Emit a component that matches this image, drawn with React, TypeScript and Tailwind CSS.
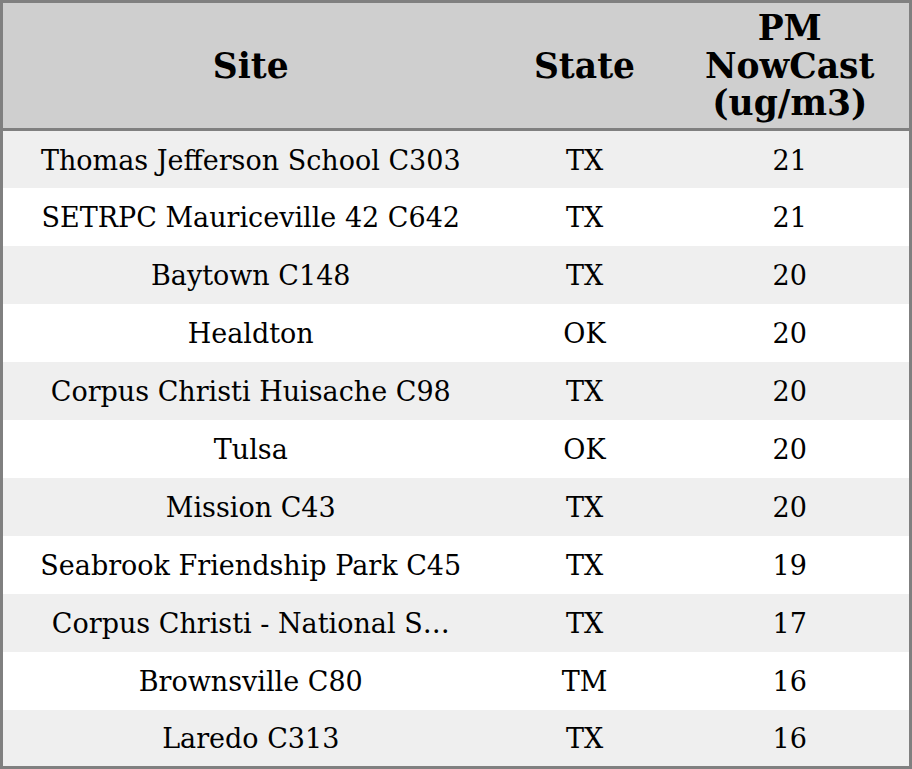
const rows = [
  { site: "Thomas Jefferson School C303", state: "TX", pm: 21 },
  { site: "SETRPC Mauriceville 42 C642", state: "TX", pm: 21 },
  { site: "Baytown C148", state: "TX", pm: 20 },
  { site: "Healdton", state: "OK", pm: 20 },
  { site: "Corpus Christi Huisache C98", state: "TX", pm: 20 },
  { site: "Tulsa", state: "OK", pm: 20 },
  { site: "Mission C43", state: "TX", pm: 20 },
  { site: "Seabrook Friendship Park C45", state: "TX", pm: 19 },
  { site: "Corpus Christi - National S…", state: "TX", pm: 17 },
  { site: "Brownsville C80", state: "TM", pm: 16 },
  { site: "Laredo C313", state: "TX", pm: 16 },
];

export default function App() {
  return (
    <div className="w-[912px] h-[769px] bg-white font-['DejaVu_Serif',serif] text-black">
      <table className="w-full h-full table-fixed border-collapse border-[3px] border-[#808080]">
        <colgroup>
          <col className="w-[497px]" />
          <col className="w-[172px]" />
          <col />
        </colgroup>
        <thead>
          <tr className="h-[128px] bg-[#cfcfcf] border-b-[3px] border-[#808080] text-[34.5px] font-bold">
            <th className="px-[20px] pt-[2px] text-center">Site</th>
            <th className="pt-[2px] text-center">State</th>
            <th className="px-[20px] pt-[2px] text-center leading-[37.5px]">PM NowCast (ug/m3)</th>
          </tr>
        </thead>
        <tbody className="text-[27px]">
          {rows.map((r, i) => (
            <tr key={r.site} className={`h-[57.7px] ${i % 2 === 0 ? "bg-[#efefef]" : "bg-white"}`}>
              <td className="px-[20px] pt-[3px] text-center">
                <div className="truncate">{r.site}</div>
              </td>
              <td className="pt-[3px] text-center">{r.state}</td>
              <td className="pt-[3px] text-center">{r.pm}</td>
            </tr>
          ))}
        </tbody>
      </table>
    </div>
  );
}
